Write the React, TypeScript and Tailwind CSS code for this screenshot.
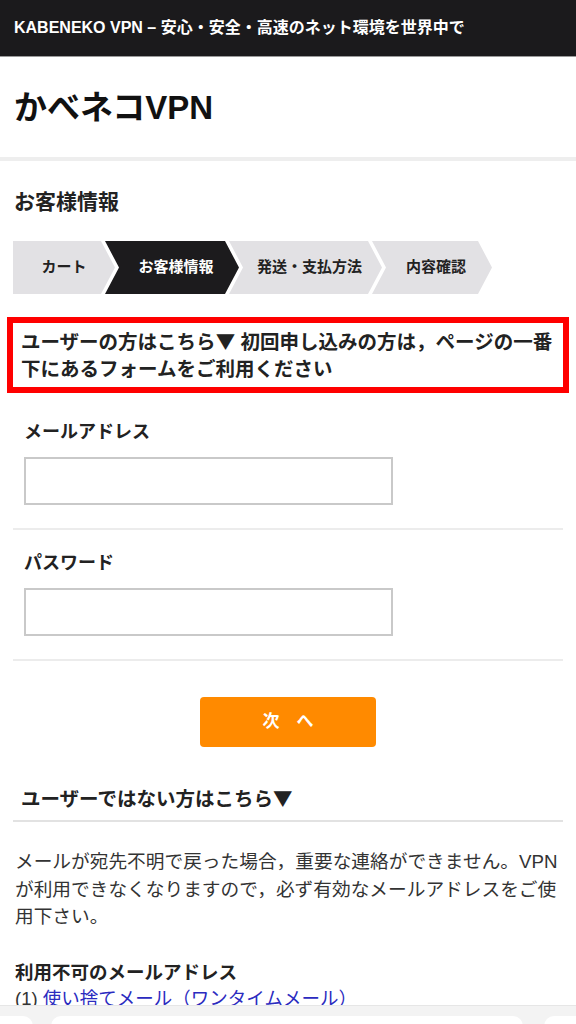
import React from "react";

const steps = [
  { label: "カート", w: "w-[102px]", first: true, active: false },
  { label: "お客様情報", w: "w-[134px]", first: false, active: true },
  { label: "発送・支払方法", w: "w-[153px]", first: false, active: false },
  { label: "内容確認", w: "w-[120px]", first: false, active: false },
];

function Steps() {
  return (
    <div className="flex pl-[13px]">
      {steps.map((s) => (
        <div
          key={s.label}
          className={`${s.w} flex h-[53px] shrink-0 items-center justify-center text-[15px] font-bold ${
            s.first
              ? "[clip-path:polygon(0_0,calc(100%_-_14px)_0,100%_50%,calc(100%_-_14px)_100%,0_100%)]"
              : "-ml-[10px] pl-[8px] [clip-path:polygon(0_0,calc(100%_-_14px)_0,100%_50%,calc(100%_-_14px)_100%,0_100%,14px_50%)]"
          } ${s.active ? "bg-[#1c1b1d] text-white" : "bg-[#e2e1e4] text-[#222]"}`}
        >
          {s.label}
        </div>
      ))}
    </div>
  );
}

function Tri() {
  return <span className="font-['Noto_Sans_CJK_JP',sans-serif]">▼</span>;
}

function Field({ label }: { label: string }) {
  return (
    <div className="px-[24px]">
      <div className="text-[18px] font-bold leading-[26px] text-[#222]">{label}</div>
      <input
        className="mt-[12px] block h-[48px] w-[369px] border-2 border-[#c9c9c9] bg-white outline-none"
        type="text"
      />
    </div>
  );
}

export default function App() {
  return (
    <div className="min-h-screen bg-white font-['Liberation_Sans','Noto_Sans_CJK_JP',sans-serif] text-[#111]">
      <header className="flex h-[57px] items-center border-b border-[#9a9a9a] bg-[#1b1a1c] px-[14px] text-[16px] font-bold text-white">
        KABENEKO VPN – 安心・安全・高速のネット環境を世界中で
      </header>

      <div className="flex h-[100px] items-center px-[14px]">
        <h1 className="text-[33px] font-bold leading-none text-[#111]">かべネコVPN</h1>
      </div>
      <div className="h-[4px] bg-[#eeeeee]" />

      <section className="pt-[27px]">
        <h2 className="px-[14px] text-[21px] font-bold leading-[28px] text-[#222]">お客様情報</h2>

        <div className="mt-[25px]">
          <Steps />
        </div>

        <div className="mx-[7px] mt-[23px] border-[6px] border-[#ff0000] py-[4px] pl-[8px]">
          <p className="whitespace-nowrap text-[19.5px] font-bold leading-[27px] text-[#222]">
            ユーザーの方はこちら<Tri /> 初回申し込みの方は，ページの一番
            <br />
            下にあるフォームをご利用ください
          </p>
        </div>

        <div className="mt-[26px]">
          <Field label="メールアドレス" />
        </div>
        <div className="mx-[13px] mt-[23px] h-[2px] bg-[#ececec]" />

        <div className="mt-[20px]">
          <Field label="パスワード" />
        </div>
        <div className="mx-[13px] mt-[23px] h-[2px] bg-[#ececec]" />

        <div className="mt-[36px] flex justify-center">
          <button className="h-[50px] w-[176px] rounded-[4px] bg-[#ff8a00] text-[17px] font-semibold text-white">
            次　へ
          </button>
        </div>

        <h3 className="mt-[37px] px-[21px] text-[19.5px] font-bold leading-[28px] text-[#222]">
          ユーザーではない方はこちら<Tri />
        </h3>
        <div className="mx-[13px] mt-[7px] h-[2px] bg-[#e2e2e2]" />

        <p className="mt-[26px] whitespace-nowrap pl-[15px] text-[18.7px] leading-[27.5px] text-[#333]">
          メールが宛先不明で戻った場合，重要な連絡ができません。VPN
          <br />
          が利用できなくなりますので，必ず有効なメールアドレスをご使
          <br />
          用下さい。
        </p>

        <h4 className="mt-[29px] pl-[15px] text-[18.5px] font-bold leading-[26px] text-[#222]">
          利用不可のメールアドレス
        </h4>
        <p className="pl-[15px] text-[18.5px] leading-[26px] text-[#333]">
          (1) <a className="text-[#2b2bbf]">使い捨てメール（ワンタイムメール）</a>
        </p>
        <div className="h-[80px]" />
      </section>

      <div className="fixed inset-x-0 bottom-0 h-[19px] border-t border-[#e6e6e6] bg-[#f3f3f3]">
        <div className="absolute left-[-10px] top-[10px] h-[20px] w-[43px] rounded-[10px] bg-white" />
        <div className="absolute left-[51px] top-[10px] h-[20px] w-[472px] rounded-[10px] bg-white" />
        <div className="absolute right-[-10px] top-[10px] h-[20px] w-[42px] rounded-[10px] bg-white" />
      </div>
    </div>
  );
}
